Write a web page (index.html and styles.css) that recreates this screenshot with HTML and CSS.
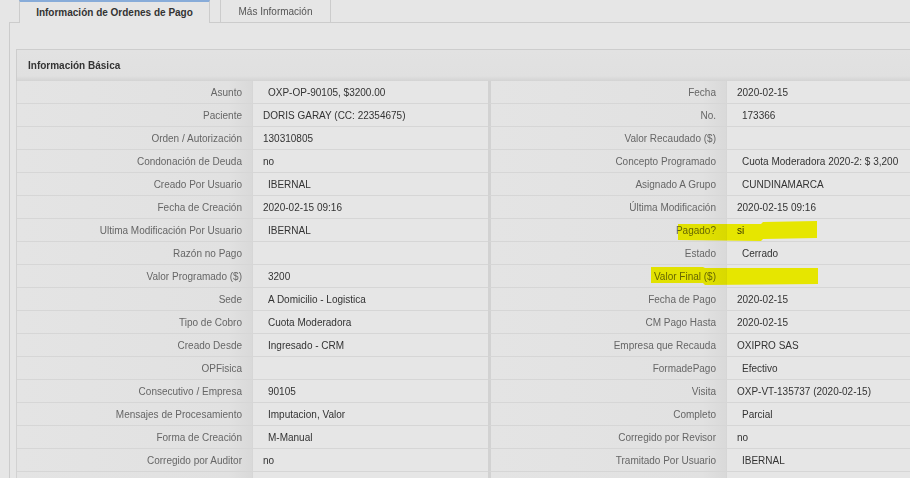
FILE: index.html
```html
<!DOCTYPE html>
<html lang="es">

<head>
    <meta charset="UTF-8">
    <meta name="viewport" content="width=device-width, initial-scale=1.0">
    <title>Orden de Pago</title>
    <link rel="stylesheet" href="styles.css">
</head>

<body>
    <div class="tabs">
        <div class="tab active">Información de Ordenes de Pago</div>
        <div class="tab">Más Información</div>
    </div>
    <div class="panel">
        <div class="section-header">Información Básica</div>
        <div class="table-wrap">
            <table class="info-table">
                <colgroup>
                    <col class="c-lbl1">
                    <col class="c-val1">
                    <col class="c-lbl2">
                    <col class="c-val2">
                </colgroup>
                <tbody>
                    <tr>
                        <td class="lbl">Asunto</td>
                        <td class="val sp">OXP-OP-90105, $3200.00</td>
                        <td class="lbl mid">Fecha</td>
                        <td class="val">2020-02-15</td>
                    </tr>
                    <tr>
                        <td class="lbl">Paciente</td>
                        <td class="val">DORIS GARAY (CC: 22354675)</td>
                        <td class="lbl mid">No.</td>
                        <td class="val sp">173366</td>
                    </tr>
                    <tr>
                        <td class="lbl">Orden / Autorización</td>
                        <td class="val">130310805</td>
                        <td class="lbl mid">Valor Recaudado ($)</td>
                        <td class="val"></td>
                    </tr>
                    <tr>
                        <td class="lbl">Condonación de Deuda</td>
                        <td class="val">no</td>
                        <td class="lbl mid">Concepto Programado</td>
                        <td class="val sp">Cuota Moderadora 2020-2: $ 3,200</td>
                    </tr>
                    <tr>
                        <td class="lbl">Creado Por Usuario</td>
                        <td class="val sp">IBERNAL</td>
                        <td class="lbl mid">Asignado A Grupo</td>
                        <td class="val sp">CUNDINAMARCA</td>
                    </tr>
                    <tr>
                        <td class="lbl">Fecha de Creación</td>
                        <td class="val">2020-02-15 09:16</td>
                        <td class="lbl mid">Última Modificación</td>
                        <td class="val">2020-02-15 09:16</td>
                    </tr>
                    <tr>
                        <td class="lbl">Ultima Modificación Por Usuario</td>
                        <td class="val sp">IBERNAL</td>
                        <td class="lbl mid">Pagado?</td>
                        <td class="val">si</td>
                    </tr>
                    <tr>
                        <td class="lbl">Razón no Pago</td>
                        <td class="val"></td>
                        <td class="lbl mid">Estado</td>
                        <td class="val sp">Cerrado</td>
                    </tr>
                    <tr>
                        <td class="lbl">Valor Programado ($)</td>
                        <td class="val sp">3200</td>
                        <td class="lbl mid">Valor Final ($)</td>
                        <td class="val"></td>
                    </tr>
                    <tr>
                        <td class="lbl">Sede</td>
                        <td class="val sp">A Domicilio - Logistica</td>
                        <td class="lbl mid">Fecha de Pago</td>
                        <td class="val">2020-02-15</td>
                    </tr>
                    <tr>
                        <td class="lbl">Tipo de Cobro</td>
                        <td class="val sp">Cuota Moderadora</td>
                        <td class="lbl mid">CM Pago Hasta</td>
                        <td class="val">2020-02-15</td>
                    </tr>
                    <tr>
                        <td class="lbl">Creado Desde</td>
                        <td class="val sp">Ingresado - CRM</td>
                        <td class="lbl mid">Empresa que Recauda</td>
                        <td class="val">OXIPRO SAS</td>
                    </tr>
                    <tr>
                        <td class="lbl">OPFisica</td>
                        <td class="val"></td>
                        <td class="lbl mid">FormadePago</td>
                        <td class="val sp">Efectivo</td>
                    </tr>
                    <tr>
                        <td class="lbl">Consecutivo / Empresa</td>
                        <td class="val sp">90105</td>
                        <td class="lbl mid">Visita</td>
                        <td class="val">OXP-VT-135737 (2020-02-15)</td>
                    </tr>
                    <tr>
                        <td class="lbl">Mensajes de Procesamiento</td>
                        <td class="val sp">Imputacion, Valor</td>
                        <td class="lbl mid">Completo</td>
                        <td class="val sp">Parcial</td>
                    </tr>
                    <tr>
                        <td class="lbl">Forma de Creación</td>
                        <td class="val sp">M-Manual</td>
                        <td class="lbl mid">Corregido por Revisor</td>
                        <td class="val">no</td>
                    </tr>
                    <tr>
                        <td class="lbl">Corregido por Auditor</td>
                        <td class="val">no</td>
                        <td class="lbl mid">Tramitado Por Usuario</td>
                        <td class="val sp">IBERNAL</td>
                    </tr>
                    <tr>
                        <td class="lbl"></td>
                        <td class="val"></td>
                        <td class="lbl mid"></td>
                        <td class="val"></td>
                    </tr>
                </tbody>
            </table>
            <!-- marcas de resaltador -->
            <svg class="marker marker-pagado" width="141" height="21" viewBox="0 0 141 21">
                <path d="M1 3 L84 3 L86 1 L140 0 L140 17 L86 18 L84 20 L1 19 Z" />
            </svg>
            <svg class="marker marker-final" width="168" height="20" viewBox="0 0 168 20">
                <path d="M0 1 L52 1 L54 2 L167 2 L167 18 L54 19 L52 17 L0 17 Z" />
            </svg>
        </div>
    </div>
</body>

</html>
```

FILE: styles.css
```css
* {
    margin: 0;
    padding: 0;
    box-sizing: border-box;
}

body {
    font-family: "Liberation Sans", Arial, sans-serif;
    font-size: 10px;
    color: #333;
    background-color: #e6e6e6;
    overflow: hidden;
}

.tabs {
    display: flex;
    gap: 10px;
    margin-left: 9px;
    padding-left: 10px;
    height: 22px;
}

.tab {
    height: 22px;
    border: 1px solid #ccc;
    border-top: none;
    border-bottom: none;
    display: flex;
    align-items: center;
    justify-content: center;
    color: #555;
}

.tab:first-child {
    width: 191px;
}

.tab:nth-child(2) {
    width: 111px;
}

.tab.active {
    height: 23px;
    border-top: 2px solid #88acd9;
    font-weight: bold;
    color: #333;
    background-color: #e6e6e6;
    position: relative;
    z-index: 1;
}

.panel {
    margin-left: 9px;
    border-top: 1px solid #ccc;
    border-left: 1px solid #ccc;
    padding: 26px 0 0 6px;
}

.section-header {
    height: 32px;
    border-top: 1px solid #cdcdcd;
    border-left: 1px solid #cdcdcd;
    padding-left: 11px;
    display: flex;
    align-items: center;
    font-weight: bold;
    color: #333;
    background: linear-gradient(to bottom, #e2e2e2 0%, #e0e0e0 84%, #d3d3d3 100%);
}

.table-wrap {
    position: relative;
}

.info-table {
    width: 977px;
    table-layout: fixed;
    border-collapse: separate;
    border-spacing: 0;
    border-left: 1px solid #d2d2d2;
}

.c-lbl1 {
    width: 236px;
}

.c-val1 {
    width: 235px;
}

.c-lbl2 {
    width: 239px;
}

.c-val2 {
    width: 266px;
}

.info-table td {
    height: 23px;
    border-bottom: 1px solid #d6d6d6;
    white-space: nowrap;
    overflow: hidden;
}

.lbl {
    text-align: right;
    padding-right: 10px;
    color: #666;
    border-right: 1px solid #d6d6d6;
    background: linear-gradient(to right, #e4e4e4 0%, #e1e1e1 90%, #d9d9d9 100%);
}

.lbl.mid {
    border-left: 3px solid #d2d2d2;
}

.val {
    padding-left: 10px;
    color: #333;
    background-color: #e6e6e6;
}

.val.sp {
    padding-left: 15px;
}

/* marcas amarillas */
.marker {
    position: absolute;
    mix-blend-mode: darken;
    pointer-events: none;
}

.marker path {
    fill: #ebeb00;
}

.marker-pagado {
    left: 661px;
    top: 140px;
}

.marker-final {
    left: 635px;
    top: 185px;
}
```
